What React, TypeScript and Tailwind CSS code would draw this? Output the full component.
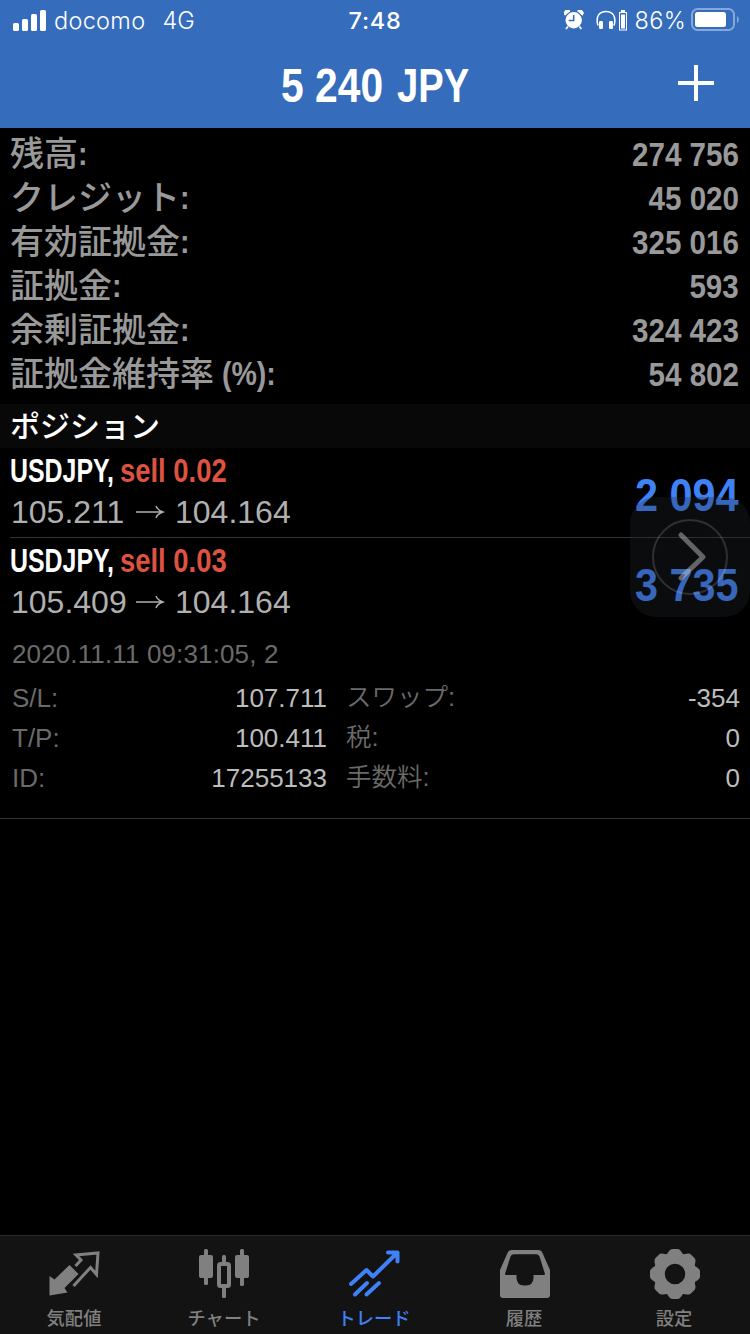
import React from "react";

const bold = "font-['Liberation_Sans',sans-serif] font-bold whitespace-nowrap";
const jp = "font-['Noto_Sans_CJK_JP',sans-serif]";
const sans = "font-['Liberation_Sans','Noto_Sans_CJK_JP',sans-serif]";

const summary = [
  { label: "残高", value: "274 756" },
  { label: "クレジット", value: "45 020" },
  { label: "有効証拠金", value: "325 016" },
  { label: "証拠金", value: "593" },
  { label: "余剰証拠金", value: "324 423" },
  { label: "証拠金維持率", suffix: " (%)", value: "54 802" },
];

const details = [
  ["S/L:", "107.711", "スワップ:", "-354"],
  ["T/P:", "100.411", "税:", "0"],
  ["ID:", "17255133", "手数料:", "0"],
];

function StatusBar() {
  return (
    <div className="flex h-10 items-center font-['Inter',sans-serif] text-[23.5px] leading-none text-white">
      <div className="flex flex-1 items-center pl-[13px]">
        <svg width="33" height="21" viewBox="0 0 33 21" fill="currentColor">
          <rect x="0" y="13" width="6" height="8" rx="1.6" />
          <rect x="9" y="9" width="6" height="12" rx="1.6" />
          <rect x="18" y="4" width="6" height="17" rx="1.6" />
          <rect x="27" y="0" width="6" height="21" rx="1.6" />
        </svg>
        <span className="ml-[8px] pt-[2px] font-[350] tracking-[0.3px]">docomo</span>
        <span className="ml-[17px] pt-[2px] font-[350]">4G</span>
      </div>
      <span className="mr-[2px] pt-[2px] font-medium tracking-[0.7px]">7:48</span>
      <div className="flex flex-1 items-center justify-end pr-[11px]">
        <svg width="20" height="20" viewBox="0 0 20 20" className="mr-[12px]">
          <g fill="currentColor">
            <circle cx="9.7" cy="10.2" r="8.2" />
            <path d="M1 5.2A3 3 0 0 1 6 1z" stroke="currentColor" strokeWidth="1" />
            <path d="M18.4 5.2A3 3 0 0 0 13.4 1z" stroke="currentColor" strokeWidth="1" />
          </g>
          <path d="M4 16.500 2 19M15.400 16.500l2 2.500" stroke="currentColor" strokeWidth="1.8" />
          <path d="M9.700 5v5.500H4.700" stroke="#356cbc" strokeWidth="1.500" fill="none" />
          <path d="M1.500 6 6 2M18 6l-4.500-4" stroke="#356cbc" strokeWidth="0.800" />
        </svg>
        <svg width="20" height="20" viewBox="0 0 20 20" className="mr-[3px]">
          <path d="M2 15.500C-1 6 4 1.500 10 1.500S21 6 18 15.500" fill="none" stroke="currentColor" strokeWidth="1.500" />
          <rect x="3" y="11" width="4" height="8" rx="1.300" fill="currentColor" />
          <rect x="13" y="11" width="4" height="8" rx="1.300" fill="currentColor" />
        </svg>
        <svg width="8" height="21" viewBox="0 0 8 21" className="mr-[8px]">
          <rect x="0.500" y="2.500" width="7" height="17.500" fill="none" stroke="currentColor" />
          <rect x="2" y="4.500" width="4" height="14" fill="currentColor" />
          <rect x="2" y="0" width="4" height="2" fill="currentColor" />
        </svg>
        <span className="pt-[2px] font-[350] tracking-[0.3px]">86%</span>
        <svg width="48" height="24" viewBox="0 0 48 24" className="ml-[5px]">
          <rect x="1" y="1" width="42" height="21" rx="5.500" fill="none" stroke="#85a8dc" strokeWidth="2" />
          <rect x="4" y="4" width="31" height="15" rx="2.500" fill="currentColor" />
          <path d="M46 8v7c2.400-1 2.400-6 0-7z" fill="#85a8dc" />
        </svg>
      </div>
    </div>
  );
}

function Position({ price, lot, profit }: { price: string; lot: string; profit: string }) {
  return (
    <div className="flex h-[89px] items-center justify-between pl-[10px] pr-[11px]">
      <div className="pb-[3px]">
        <div className={`${bold} flex h-[41px] items-center text-[33px] leading-none text-white`}>
          <span className="w-[110px]">
            <span className="inline-block origin-left scale-x-[0.755]">USDJPY,</span>
          </span>
          <span className="inline-block origin-left scale-x-[0.830] text-[#de5241]">sell {lot}</span>
        </div>
        <div className={`${sans} flex h-[41px] items-center pl-px text-[32px] leading-none text-[#b0b0b0]`}>
          <span className="w-[124px]">{price}</span>
          <svg width="30" height="14" viewBox="0 0 30 14" fill="none" stroke="currentColor" strokeWidth="1.400" className="mr-[10px]">
            <path d="M1 7h27M21 1c1 3 4 5 7 6c-3 1-6 3-7 6" />
          </svg>
          <span>104.164</span>
        </div>
      </div>
      <span className={`${bold} origin-right scale-x-[0.880] pt-[3px] text-[47px] leading-none text-[#3f82f7]`}>{profit}</span>
    </div>
  );
}

const tabs = [
  {
    label: "気配値",
    icon: (
      <svg width="52" height="50" viewBox="1 0 52 50" className="overflow-visible">
        <path d="M1.500 27v19.500l18-3-3-4.500 14-14-9-9L6.500 30.500z" fill="currentColor" />
        <path d="M27.500 17 33 11l-5-5 22-2-1.500 21.500-6-7L25.500 37" fill="none" stroke="currentColor" strokeWidth="3" />
      </svg>
    ),
  },
  {
    label: "チャート",
    icon: (
      <svg width="52" height="50" viewBox="1 0 52 50" fill="currentColor" className="overflow-visible">
        <rect x="1" y="6" width="14" height="23" rx="2" />
        <rect x="6" y="0" width="4" height="36" rx="1.500" />
        <rect x="37" y="6" width="14" height="23" rx="2" />
        <rect x="42" y="0" width="4" height="37" rx="1.500" />
        <rect x="21" y="15" width="10" height="22" rx="1.500" fill="none" stroke="currentColor" strokeWidth="4" />
        <rect x="24" y="6" width="4" height="8" rx="1.500" />
        <rect x="24" y="38" width="4" height="11" rx="1.500" />
      </svg>
    ),
  },
  {
    label: "トレード",
    active: true,
    icon: (
      <svg width="52" height="50" viewBox="1 0 52 50" fill="none" stroke="currentColor" strokeWidth="4" strokeLinecap="round" strokeLinejoin="round" className="overflow-visible">
        <path d="M3 35 18.500 21l6.500 6.500L49 4M40 3.500h9.500V12.500" />
        <path d="M7 45.500 19 34M18.500 45.500 31 34" />
      </svg>
    ),
  },
  {
    label: "履歴",
    icon: (
      <svg width="52" height="50" viewBox="0 0 52 50">
        <path
          fillRule="evenodd"
          fill="currentColor"
          d="M13 1H39Q42.500 1 43.500 4L51 21V46Q51 49 48 49H4Q1 49 1 46V21L8.500 4Q9.500 1 13 1zM15 5.200Q12.500 5.200 11.500 7.500L6 25Q6 26 7 26H17.500V29Q18 36.500 25 36.500H27Q34 36.500 34.500 29V26H45Q46 26 46 25L40.500 7.500Q39.500 5.200 37 5.200z"
        />
      </svg>
    ),
  },
  {
    label: "設定",
    icon: (
      <svg width="52" height="50" viewBox="-26 -25 52 50">
        <g fill="currentColor">
          {[0, 45, 90, 135, 180, 225, 270, 315].map((angle) => (
            <path key={angle} transform={`rotate(${angle})`} d="M-10-18C-7-20-6-25-2.500-25h5C6-25 7-20 10-18z" />
          ))}
        </g>
        <circle r="15.500" fill="none" stroke="currentColor" strokeWidth="10.500" />
      </svg>
    ),
  },
];

export default function App() {
  return (
    <div className="relative flex h-[1334px] w-[750px] flex-col overflow-hidden bg-black">
      <header className="h-32 shrink-0 bg-[#356cbc]">
        <StatusBar />
        <div className="grid h-[88px] grid-cols-[1fr_auto_1fr] items-center text-white">
          <span />
          <h1 className={`${bold} flex w-[188px] pt-[4px] text-[48px] leading-none`}>
            <span className="w-[116px]">
              <span className="inline-block origin-left scale-x-[0.850]">5 240</span>
            </span>
            <span className="inline-block origin-left scale-x-[0.795]">JPY</span>
          </h1>
          <svg width="36" height="36" viewBox="0 0 36 36" stroke="currentColor" strokeWidth="4" className="mb-[2px] mr-[36px] justify-self-end">
            <path d="M0 18h36M18 0v36" />
          </svg>
        </div>
      </header>

      <section className="h-[276px] shrink-0 pt-[4px] text-[#999999]">
        {summary.map((row) => (
          <div key={row.label} className="flex h-11 items-center justify-between pl-[10px] pr-[11px] leading-none">
            <span className="flex items-center whitespace-pre pb-[2px] text-[34px]">
              <span className={`${jp} pb-[2px] font-medium leading-none`}>{row.label}</span>
              <span className="font-['Liberation_Sans',sans-serif] inline-block origin-left scale-x-[0.840] whitespace-pre font-bold">{row.suffix}:</span>
            </span>
            <span className={`${bold} inline-block origin-right scale-x-[0.870] text-[34px]`}>{row.value}</span>
          </div>
        ))}
      </section>

      <h2 className={`${jp} flex h-11 shrink-0 items-center bg-[#080808] pb-[5px] pl-[10px] text-[30px] font-medium leading-none text-white`}>
        ポジション
      </h2>

      <section className="shrink-0 border-b border-[#333333]">
        <Position price="105.211" lot="0.02" profit="2 094" />
        <div className="ml-[10px] h-px bg-[#333333]" />
        <Position price="105.409" lot="0.03" profit="3 735" />
        <div className={`${sans} h-[191px] pl-[12px] pr-[10px] pt-[5px] text-[26px] leading-none`}>
          <div className="mb-[2px] flex h-[44px] items-center tracking-[0.13px] text-[#6a6a6a]">2020.11.11 09:31:05, 2</div>
          {details.map(([a, b, c, d]) => (
            <div key={a} className="flex h-10 items-center">
              <span className="w-[120px] text-[#6a6a6a]">{a}</span>
              <span className="w-[195px] text-right text-[#bdbdbd]">{b}</span>
              <span className="ml-[19px] flex-1 text-[25.5px] font-[350] text-[#6a6a6a]">{c}</span>
              <span className="text-[#bdbdbd]">{d}</span>
            </div>
          ))}
        </div>
      </section>

      <div className="flex-1" />

      <nav className="grid h-[99px] shrink-0 grid-cols-5 border-t border-[#2b2b2b] bg-[#131313]">
        {tabs.map((tab) => (
          <div key={tab.label} className={`flex flex-col items-center pt-[13px] ${tab.active ? "text-[#3f82f7]" : "text-[#808080]"}`}>
            {tab.icon}
            <span className={`${jp} mr-[2px] mt-[8px] text-[18.300px] font-medium leading-[20px]`}>{tab.label}</span>
          </div>
        ))}
      </nav>

      <div className="absolute left-[630px] top-[497px] flex h-[120px] w-[120px] items-center justify-center rounded-[26px] bg-[#25282d]/30">
        <svg width="78" height="78" viewBox="0 0 78 78" fill="none">
          <circle cx="39" cy="39" r="37" stroke="#ffffff" strokeOpacity="0.150" strokeWidth="2" />
          <path d="M30 17 52 39 30 60" stroke="#d0d0d0" strokeOpacity="0.450" strokeWidth="5" strokeLinecap="round" strokeLinejoin="round" />
        </svg>
      </div>
    </div>
  );
}
